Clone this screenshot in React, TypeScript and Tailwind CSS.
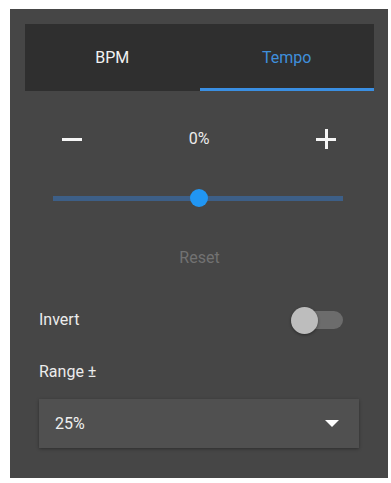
import React from "react";

export default function App() {
  return (
    <div
      className="w-[391px] h-[483px] bg-white pt-[9px] pl-[10px]"
      style={{ fontFamily: "Roboto, 'Noto Sans', sans-serif" }}
    >
      <div className="w-[378px] h-[469px] bg-[#464646] pt-[15px] pl-[15px] pr-[14px]">
        {/* Tabs */}
        <div className="h-[67px] bg-[#2f2f2f] flex">
          <div className="flex-1 flex items-center justify-center text-[16px] text-[#f2f2f2]">
            BPM
          </div>
          <div className="flex-1 relative flex items-center justify-center text-[16px] text-[#3f8fdc]">
            Tempo
            <div className="absolute left-0 right-0 bottom-0 h-[3px] bg-[#3a8fe2]" />
          </div>
        </div>

        {/* +/- row */}
        <div className="mt-[34px] h-[28px] flex items-center justify-between pl-[37px] pr-[38px]">
          <div className="w-[20px] h-[3px] bg-[#f5f5f5]" />
          <div className="text-[16px] text-[#ececec]">0%</div>
          <div className="w-[20px] h-[20px] relative">
            <div className="absolute left-0 right-0 top-[8.5px] h-[3px] bg-[#f5f5f5]" />
            <div className="absolute top-0 bottom-0 left-[8.5px] w-[3px] bg-[#f5f5f5]" />
          </div>
        </div>

        {/* Slider */}
        <div className="mt-[35px] h-[20px] ml-[28px] mr-[31px] relative flex items-center">
          <div className="w-full h-[5px] bg-[#3d5f87]" />
          <div className="absolute left-[137px] top-[1px] w-[18px] h-[18px] rounded-full bg-[#2196f3]" />
        </div>

        {/* Reset */}
        <div className="mt-[38px] h-[24px] flex items-center justify-center text-[16px] text-[#727272]">
          Reset
        </div>

        {/* Invert */}
        <div className="mt-[36px] h-[28px] flex items-center justify-between pl-[14px] pr-[31px]">
          <div className="text-[16px] text-[#ececec]">Invert</div>
          <div className="relative w-[49px] h-[18px] rounded-full bg-[#6c6c6c]">
            <div className="absolute left-[-3px] top-[-4.5px] w-[27px] h-[27px] rounded-full bg-[#bdbdbd] shadow-[0_1px_3px_rgba(0,0,0,0.4)]" />
          </div>
        </div>

        {/* Range */}
        <div className="mt-[26px] h-[24px] flex items-center pl-[14px] text-[16px] text-[#ececec]">
          Range ±
        </div>

        {/* Select */}
        <div className="mt-[15px] ml-[14px] w-[320px] h-[49px] bg-[#505050] shadow-[0_1px_3px_rgba(0,0,0,0.35)] flex items-center justify-between pl-[16px] pr-[20px]">
          <div className="text-[16px] text-[#f0f0f0]">25%</div>
          <svg width="14" height="8" viewBox="0 0 14 8">
            <path d="M0 0 L14 0 L7 7 Z" fill="#ffffff" />
          </svg>
        </div>
      </div>
    </div>
  );
}
